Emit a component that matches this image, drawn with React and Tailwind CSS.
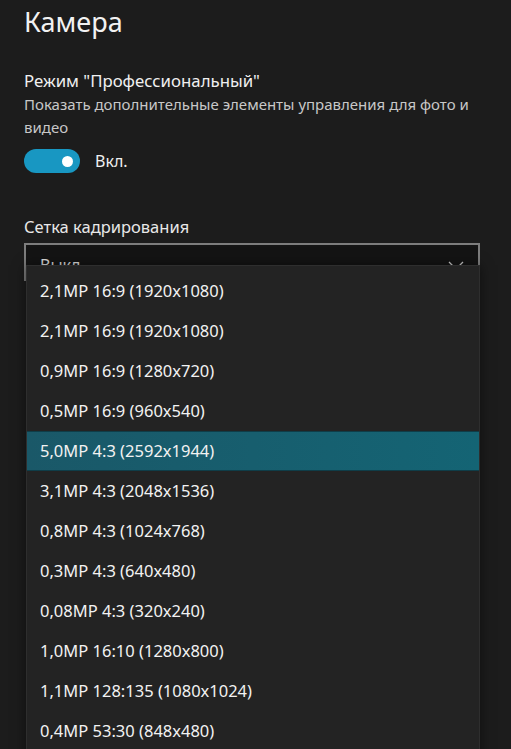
import React from "react";

const options = [
    "2,1MP 16:9 (1920x1080)",
    "2,1MP 16:9 (1920x1080)",
    "0,9MP 16:9 (1280x720)",
    "0,5MP 16:9 (960x540)",
    "5,0MP 4:3 (2592x1944)",
    "3,1MP 4:3 (2048x1536)",
    "0,8MP 4:3 (1024x768)",
    "0,3MP 4:3 (640x480)",
    "0,08MP 4:3 (320x240)",
    "1,0MP 16:10 (1280x800)",
    "1,1MP 128:135 (1080x1024)",
    "0,4MP 53:30 (848x480)",
];

const selected = 4;

export default function App() {
    return (
        <div className="relative w-[511px] h-[749px] overflow-hidden bg-[#1c1c1c] text-white font-['Noto_Sans',sans-serif]">
            <div className="px-[24px] pt-[2px]">
                <h1 className="text-[27px] leading-[40px] font-normal text-[#f2f2f2]">Камера</h1>

                <div className="mt-[28px] text-[16.8px] leading-[22px] text-[#f0f0f0]">Режим "Профессиональный"</div>
                <div className="mt-[1px] text-[15px] leading-[23px] text-[#c8c8c8] pr-[10px]">
                    Показать дополнительные элементы управления для фото и видео
                </div>

                <div className="mt-[10px] flex items-center gap-[15px]">
                    <div className="w-[56px] h-[24px] rounded-full bg-[#1897c2] flex items-center justify-end pr-[7px]">
                        <div className="w-[11px] h-[11px] rounded-full bg-white" />
                    </div>
                    <span className="text-[16px] text-[#f0f0f0]">Вкл.</span>
                </div>

                <div className="mt-[43px] text-[16.5px] leading-[22px] text-[#e8e8e8]">Сетка кадрирования</div>
                <div className="mt-[5px] w-[456px] h-[38px] border-2 border-[#7d7d7d] bg-[#141414] flex items-center justify-between px-[14px]">
                    <span className="text-[16px] text-[#e0e0e0] mt-[6px]">Выкл</span>
                    <svg width="16" height="9" viewBox="0 0 16 9" fill="none" stroke="#d0d0d0" strokeWidth="1.3" className="mt-[6px]">
                        <path d="M1 1l7 7 7-7" />
                    </svg>
                </div>
            </div>

            <div className="absolute left-[26px] top-[265px] w-[454px] h-[500px] bg-[#232323] border border-[#2e2e2e] pt-[5px] shadow-[0_0_12px_rgba(0,0,0,0.5)]">
                {options.map((opt, i) => (
                    <div
                        key={i}
                        className={
                            i === selected
                                ? "h-[40px] flex items-center pl-[13px] text-[16.5px] text-[#f2f2f2] bg-[linear-gradient(90deg,#1a5868,#146474)] border-y border-[#0f3d48]"
                                : "h-[40px] flex items-center pl-[13px] text-[16.5px] text-[#f2f2f2]"
                        }
                    >
                        {opt}
                    </div>
                ))}
            </div>
        </div>
    );
}
